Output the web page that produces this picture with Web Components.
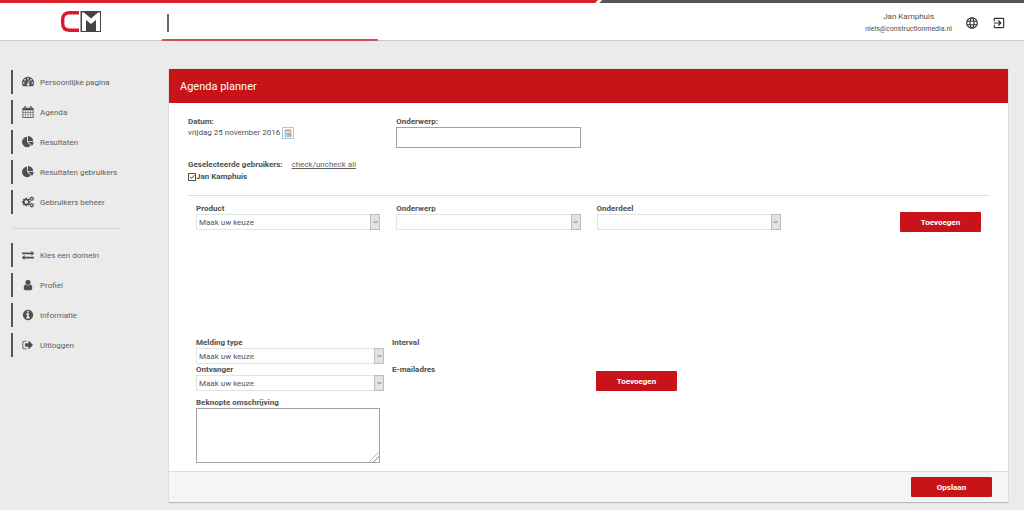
<!DOCTYPE html>
<html lang="nl">
<head>
<meta charset="utf-8">
<meta name="viewport" content="width=device-width, initial-scale=1">
<title>Agenda planner</title>
<style>
  html, body { margin: 0; min-height: 100%; background: #ebebeb; }
  body { font: 8px/10px Roboto, "Liberation Sans", sans-serif; color: #505050; }
</style>
</head>
<body>
<cm-app></cm-app>
<script>
const define = (name, html, setup) => customElements.define(name, class extends HTMLElement {
  connectedCallback() {
    if (this.shadowRoot) return;
    const t = document.createElement('template');
    t.innerHTML = typeof html === 'function' ? html(this) : html;
    this.attachShadow({ mode: 'open' }).append(t.content.cloneNode(true));
    if (setup) setup(this);
  }
});

const gear = (cx, cy, r, hole, n) => {
  let d = '';
  for (let i = 0; i < n; i++) {
    const a = i * 2 * Math.PI / n, s = Math.PI / n;
    [[-.9, .76], [-.45, 1], [.45, 1], [.9, .76]].forEach(([k, m]) => {
      d += (d && !d.endsWith('Z') ? 'L' : 'M') + (cx + r * m * Math.sin(a + k * s)).toFixed(1) + ' ' + (cy - r * m * Math.cos(a + k * s)).toFixed(1);
    });
  }
  return d + `ZM${cx - hole} ${cy}a${hole} ${hole} 0 1 0 ${2 * hole} 0a${hole} ${hole} 0 1 0 ${-2 * hole} 0Z`;
};

const ICONS = {
  dashboard: ['0 0 1792 1792', '<path fill-rule="evenodd" d="M0 1024a896 896 0 1 1 1792 0q0 261-141 483-19 29-54 29H195q-35 0-54-29Q0 1286 0 1024zM256 896a128 128 0 1 0 0 256 128 128 0 1 0 0-256zM448 448a128 128 0 1 0 0 256 128 128 0 1 0 0-256zM896 256a128 128 0 1 0 0 256 128 128 0 1 0 0-256zM1344 448a128 128 0 1 0 0 256 128 128 0 1 0 0-256zM1536 896a128 128 0 1 0 0 256 128 128 0 1 0 0-256zM1083 643q-25-7-47 5.500t-29 38.500l-101 382q-60 5-107 43.500t-63 98.500a192 192 0 1 0 371 98q16-60-6-117t-72-91l101-382q6-26-7.500-48t-39.500-28z"/>'],
  calendar: ['0 0 1792 1792', '<path fill-rule="evenodd" d="M192 256h1408q52 0 90 38t38 90v1280q0 52-38 90t-90 38H192q-52 0-90-38t-38-90V384q0-52 38-90t90-38zM192 640v260h270V640zM526 640v260h338V640zM928 640v260h338V640zM1330 640v260h270V640zM192 964v288h270V964zM526 964v288h338V964zM928 964v288h338V964zM1330 964v288h270V964zM192 1316v348h270v-348zM526 1316v348h338v-348zM928 1316v348h338v-348zM1330 1316v348h270v-348z"/><rect x="352" y="0" width="260" height="480" rx="100"/><rect x="1180" y="0" width="260" height="480" rx="100"/><path fill="#ebebeb" d="M448 100h68v290h-68zM1276 100h68v290h-68z"/>'],
  pie: ['0 0 1792 1792', '<path d="M768 890l546 546q-106 108-247.500 168t-298.500 60q-209 0-385.500-103t-279.500-279.500-103-385.500 103-385.500 279.500-279.500 385.500-103v762zm187 6h773q0 157-60 298.500t-168 247.500zm709-128h-768v-768q209 0 385.500 103t279.500 279.500 103 385.500z"/>'],
  cogs: ['0 0 1792 1792', `<path fill-rule="evenodd" d="${gear(640, 896, 640, 256, 8)}${gear(1460, 410, 340, 128, 6)}${gear(1460, 1380, 340, 128, 6)}"/>`],
  exchange: ['0 0 1792 1792', '<path d="M1792 1184v192q0 13-9.500 22.500t-22.500 9.500h-1376v192q0 13-9.500 22.500t-22.500 9.500q-12 0-24-10l-319-320q-9-9-9-22 0-14 9-23l320-320q9-9 23-9 13 0 22.500 9.500t9.500 22.500v192h1376q13 0 22.500 9.500t9.500 22.500zm0-544q0 14-9 23l-320 320q-9 9-23 9-13 0-22.500-9.500t-9.500-22.500v-192h-1376q-13 0-22.500-9.500t-9.500-22.500v-192q0-13 9.500-22.500t22.500-9.500h1376v-192q0-14 9-23t23-9q12 0 24 10l319 319q9 9 9 23z"/>'],
  user: ['0 0 1792 1792', '<path d="M1536 1399q0 109-62.500 187t-150.500 78h-854q-88 0-150.500-78t-62.500-187q0-85 8.500-160.500t31.500-152 58.500-131 94-89 134.500-34.500q131 128 313 128t313-128q76 0 134.500 34.500t94 89 58.500 131 31.500 152 8.500 160.500zm-256-887q0 159-112.500 271.500t-271.500 112.500-271.500-112.500-112.500-271.500 112.500-271.500 271.500-112.500 271.500 112.500 112.500 271.500z"/>'],
  info: ['0 0 1792 1792', '<path d="M1152 1376v-160q0-14-9-23t-23-9h-96v-512q0-14-9-23t-23-9h-320q-14 0-23 9t-9 23v160q0 14 9 23t23 9h96v320h-96q-14 0-23 9t-9 23v160q0 14 9 23t23 9h448q14 0 23-9t9-23zm-128-896v-160q0-14-9-23t-23-9h-192q-14 0-23 9t-9 23v160q0 14 9 23t23 9h192q14 0 23-9t9-23zm640 416q0 209-103 385.500t-279.500 279.500-385.500 103-385.500-103-279.500-279.500-103-385.500 103-385.500 279.500-279.500 385.500-103 385.500 103 279.500 279.500 103 385.500z"/>'],
  signout: ['0 0 1792 1792', '<path d="M704 1440q0 4 1 20t.5 26.500-3 23.500-10 19.500-20.500 6.500h-320q-119 0-203.500-84.500t-84.500-203.500v-704q0-119 84.500-203.500t203.500-84.500h320q13 0 22.500 9.500t9.500 22.500q0 4 1 20t.5 26.500-3 23.500-10 19.500-20.500 6.500h-320q-66 0-113 47t-47 113v704q0 66 47 113t113 47h312l11.500 1 11.500 3 8 5.500 7 9 2 13.500zm928-544q0 26-19 45l-544 544q-19 19-45 19t-45-19-19-45v-288h-448q-26 0-45-19t-19-45v-384q0-26 19-45t45-19h448v-288q0-26 19-45t45-19 45 19l544 544q19 19 19 45z"/>'],
  globe: ['0 0 24 24', '<path d="M11.990 2C6.470 2 2 6.480 2 12s4.470 10 9.990 10C17.520 22 22 17.520 22 12S17.520 2 11.990 2zm6.930 6h-2.950c-.32-1.250-.78-2.450-1.380-3.560 1.840.63 3.370 1.910 4.330 3.560zM12 4.040c.83 1.200 1.480 2.530 1.910 3.960h-3.820c.43-1.430 1.080-2.760 1.910-3.960zM4.260 14C4.100 13.360 4 12.690 4 12s.1-1.360.26-2h3.380c-.08.66-.14 1.320-.14 2 0 .68.06 1.340.14 2H4.260zm.82 2h2.950c.32 1.250.78 2.450 1.380 3.560-1.840-.63-3.370-1.900-4.330-3.560zm2.950-8H5.080c.96-1.660 2.490-2.930 4.330-3.560C8.810 5.550 8.350 6.750 8.030 8zM12 19.960c-.83-1.200-1.480-2.530-1.910-3.960h3.820c-.43 1.430-1.080 2.760-1.910 3.960zM14.340 14H9.660c-.09-.66-.16-1.320-.16-2 0-.68.07-1.350.16-2h4.680c.09.65.16 1.320.16 2 0 .68-.07 1.340-.16 2zm.25 5.560c.6-1.110 1.060-2.310 1.380-3.560h2.950c-.96 1.650-2.490 2.930-4.330 3.560zM16.360 14c.08-.66.14-1.320.14-2 0-.68-.06-1.340-.14-2h3.380c.16.64.26 1.310.26 2s-.1 1.360-.26 2h-3.380z"/>'],
  exit: ['0 0 24 24', '<path d="M10.090 15.590L11.500 17l5-5-5-5-1.410 1.410L12.670 11H3v2h9.670l-2.580 2.590zM19 3H5c-1.110 0-2 .9-2 2v4h2V5h14v14H5v-4H3v4c0 1.100.89 2 2 2h14c1.100 0 2-.9 2-2V5c0-1.100-.9-2-2-2z"/>'],
  datepick: ['0 0 12 12', '<path fill="#e4eef6" stroke="#7fa6c8" d="M2.500 2.500h7v8h-7z"/><path fill="#e3935f" d="M3 2h6v2H3zM7 7h3v3H7z"/><path stroke="#5b86ad" d="M4 6.500h4M4 8.500h3"/>']
};

define('cm-icon', el => {
  const [box, body] = ICONS[el.getAttribute('name')];
  return `<style>
    :host { display: block; width: 12px; height: 12px; flex: none; }
    svg { display: block; width: 100%; height: 100%; fill: currentColor; overflow: visible; }
  </style><svg viewBox="${box}" aria-hidden="true">${body}</svg>`;
});

define('cm-logo', `<style>
    :host { display: block; width: 40px; height: 21px; }
    svg { display: block; width: 100%; height: 100%; }
  </style>
  <svg viewBox="0 0 40 21" role="img" aria-label="CM">
    <path fill="none" stroke="#d81830" stroke-width="3.400" d="M18 1.700H9Q1.700 1.700 1.700 8.500V12.500Q1.700 19.300 9 19.300H18"/>
    <path fill="#444" d="M19.500 0H40v21H19.500z"/>
    <path fill="#fff" d="M21 20V1.500h2l7 6 7-6h2V20h-4V9l-5 4-5-4V20z"/>
  </svg>`);

define('cm-header', `<style>
    :host { display: block; background: #fff; }
    .strip { height: 3px; background: linear-gradient(135deg, #dc1f2b 0 calc(58.3% - 1px), #fff 58.3% calc(58.3% + 2px), #555 calc(58.3% + 3px)); }
    .bar { display: grid; grid-template-columns: 162px 216px 1fr auto; height: 38px; box-sizing: border-box; border-bottom: 1px solid #c9c9c9; }
    cm-logo { margin: 8px 0 0 61px; }
    .title { margin-bottom: -1px; border-bottom: 2px solid #c9525b; }
    .title i { display: block; width: 2px; height: 18px; margin: 11px 0 0 5px; background: #666; }
    .account { grid-column: 4; display: flex; align-items: center; padding: 2px 18px 0 0; gap: 13px; }
    .who { text-align: center; line-height: 12px; }
    .who b { display: block; font-weight: 400; font-size: 8px; }
    .who span { font-size: 7px; }
    a { color: #333; }
    a cm-icon { width: 14px; height: 14px; }
  </style>
  <div class="strip"></div>
  <div class="bar">
    <cm-logo></cm-logo>
    <div class="title"><i></i></div>
    <div class="account">
      <div class="who"><b>Jan Kamphuis</b><span>niels@constructionmedia.nl</span></div>
      <a href="#taal" aria-label="Taal"><cm-icon name="globe"></cm-icon></a>
      <a href="#uitloggen" aria-label="Uitloggen"><cm-icon name="exit"></cm-icon></a>
    </div>
  </div>`);

define('cm-nav-item', el => `<style>
    :host { display: block; }
    a { display: flex; align-items: center; gap: 6px; height: 24px; padding-left: 9px; border-left: 2px solid #555; color: #606060; text-decoration: none; }
    cm-icon { color: #505050; }
    span { padding-top: 2px; }
  </style>
  <a href="#${el.getAttribute('icon')}"><cm-icon name="${el.getAttribute('icon')}"></cm-icon><span><slot></slot></span></a>`);

define('cm-sidebar', `<style>
    :host { display: block; padding: 1px 48px 0 11px; }
    nav { display: grid; gap: 6px; }
    hr { margin: 14px 0 14px 2px; border: 0; border-top: 1px solid #d2d2d2; }
  </style>
  <nav aria-label="Hoofdmenu">
    <cm-nav-item icon="dashboard">Persoonlijke pagina</cm-nav-item>
    <cm-nav-item icon="calendar">Agenda</cm-nav-item>
    <cm-nav-item icon="pie">Resultaten</cm-nav-item>
    <cm-nav-item icon="pie">Resultaten gebruikers</cm-nav-item>
    <cm-nav-item icon="cogs">Gebruikers beheer</cm-nav-item>
  </nav>
  <hr>
  <nav aria-label="Account">
    <cm-nav-item icon="exchange">Kies een domein</cm-nav-item>
    <cm-nav-item icon="user">Profiel</cm-nav-item>
    <cm-nav-item icon="info">Informatie</cm-nav-item>
    <cm-nav-item icon="signout">Uitloggen</cm-nav-item>
  </nav>`);

define('cm-button', `<style>
    :host { display: block; width: 81px; }
    button { display: block; width: 100%; height: 20px; padding: 1px 0 0; border: 0; border-radius: 1px; background: #c81419; color: #fff; font: 700 8px/19px Roboto, sans-serif; cursor: pointer; }
  </style><button type="button"><slot></slot></button>`);

define('cm-select', el => `<style>
    :host { display: block; }
    label { display: block; font-weight: 700; }
    .box { display: grid; height: 16px; }
    select, span { grid-area: 1 / 1; }
    select { appearance: none; width: 100%; height: 16px; margin: 0; padding: 1px 12px 0 2px; border: 1px solid #e4e4e4; border-radius: 0; background: #fff; color: #555; font: inherit; }
    span { justify-self: end; display: grid; place-items: center; width: 10px; box-sizing: border-box; border: 1px solid #bdbdbd; background: #e3e3e3; pointer-events: none; }
    svg { width: 5px; height: 4px; fill: none; stroke: #777; }
  </style>
  <label for="s">${el.getAttribute('label')}</label>
  <div class="box">
    <select id="s"><option>${el.getAttribute('value') || ''}</option></select>
    <span><svg viewBox="0 0 5 4"><path d="M.5 1l2 2 2-2"/></svg></span>
  </div>`);

define('cm-input', el => `<style>
    :host { display: block; }
    label { display: block; font-weight: 700; }
    input, textarea { display: block; box-sizing: border-box; width: 100%; margin: 0; padding: 2px; border: 1px solid #a3a3a3; border-radius: 0; background: #fff; font: inherit; }
    input { height: 21px; }
    textarea { height: 55px; resize: vertical; }
    textarea::-webkit-resizer { background: linear-gradient(135deg, #fff 64%, #bbb 64% 70%, #fff 70% 78%, #bbb 78% 84%, #fff 84%); }
  </style>
  <label for="f">${el.getAttribute('label')}</label>
  ${el.hasAttribute('multiline') ? '<textarea id="f"></textarea>' : '<input id="f" type="text">'}`);

define('cm-date', `<style>
    :host { display: block; }
    b { display: block; }
    div { display: flex; align-items: center; gap: 2px; height: 12px; white-space: nowrap; }
    button { display: block; width: 12px; height: 12px; padding: 0; border: 1px solid #a9c4dc; background: #fff; }
    cm-icon { width: 10px; height: 10px; }
  </style>
  <b>Datum:</b>
  <div>vrijdag 25 november 2016 <button type="button" aria-label="Kies datum"><cm-icon name="datepick"></cm-icon></button></div>`);

define('cm-users', `<style>
    :host { display: block; }
    .head { display: flex; gap: 9px; font-weight: 700; }
    a { color: #606060; font-weight: 400; }
    .user { display: flex; align-items: center; height: 13px; font-weight: 700; }
    input { appearance: none; width: 8px; height: 8px; margin: 0; border: 1px solid #555; background: #fff; }
    .tick { display: grid; }
    .tick > * { grid-area: 1 / 1; }
    svg { width: 8px; height: 8px; fill: none; stroke: #444; pointer-events: none; visibility: hidden; }
    input:checked + svg { visibility: visible; }
  </style>
  <div class="head">Geselecteerde gebruikers: <a href="#all">check/uncheck all</a></div>
  <div class="user">
    <span class="tick"><input type="checkbox" id="u" checked><svg viewBox="0 0 8 8"><path d="M2 4l1.500 1.500L6.500 2"/></svg></span>
    <label for="u">Jan Kamphuis</label>
  </div>`);

define('cm-card', `<style>
    :host { display: block; background: #fff; box-shadow: 0 1px 1px #bbb, 0 0 1px #bbb; }
    header { display: flex; align-items: center; height: 34px; box-sizing: border-box; padding: 2px 11px 0; background: #c81419; color: #fff; }
    h1 { margin: 0; font-size: 11px; line-height: 16px; font-weight: 400; }
    section { padding: 14px 19px 8px; }
    footer { display: flex; justify-content: flex-end; padding: 5px 16px; border-top: 1px solid #dcdcdc; background: #f5f5f5; }
  </style>
  <header><h1><slot name="title"></slot></h1></header>
  <section><slot></slot></section>
  <footer><slot name="footer"></slot></footer>`);

define('cm-planner', `<style>
    :host { display: block; }
    .cols { display: grid; grid-template-columns: repeat(4, 1fr); }
    .cols > * { margin: 0 8px; }
    .cols > cm-date { margin-left: 0; }
    cm-users { margin-top: 12px; }
    hr { margin: 12px 0 8px; border: 0; border-top: 1px solid #dedede; }
    .cols > cm-button { justify-self: end; margin-top: 8px; }
    .items { min-height: 106px; }
    .alerts { display: grid; grid-template-columns: repeat(4, 1fr); gap: 1px 8px; padding: 0 17px 0 8px; }
    .alerts b { align-self: start; }
    .alerts cm-button { align-self: end; margin-left: 8px; }
    .note { margin-top: 7px; }
  </style>
  <cm-card>
    <span slot="title">Agenda planner</span>
    <div class="cols"><cm-date></cm-date><cm-input label="Onderwerp:"></cm-input></div>
    <cm-users></cm-users>
    <hr>
    <div class="cols">
      <cm-select label="Product" value="Maak uw keuze"></cm-select>
      <cm-select label="Onderwerp"></cm-select>
      <cm-select label="Onderdeel"></cm-select>
      <cm-button>Toevoegen</cm-button>
    </div>
    <div class="items"></div>
    <div class="alerts">
      <cm-select label="Melding type" value="Maak uw keuze"></cm-select><b>Interval</b><i></i><i></i>
      <cm-select label="Ontvanger" value="Maak uw keuze"></cm-select><b>E-mailadres</b><cm-button>Toevoegen</cm-button>
    </div>
    <div class="cols note"><cm-input label="Beknopte omschrijving" multiline></cm-input></div>
    <cm-button slot="footer">Opslaan</cm-button>
  </cm-card>`);

define('cm-app', `<style>
    :host { display: block; }
    main { display: grid; grid-template-columns: 169px 1fr; align-items: start; padding: 28px 16px 8px 0; }
  </style>
  <cm-header></cm-header>
  <main><cm-sidebar></cm-sidebar><cm-planner></cm-planner></main>`);
</script>
</body>
</html>
